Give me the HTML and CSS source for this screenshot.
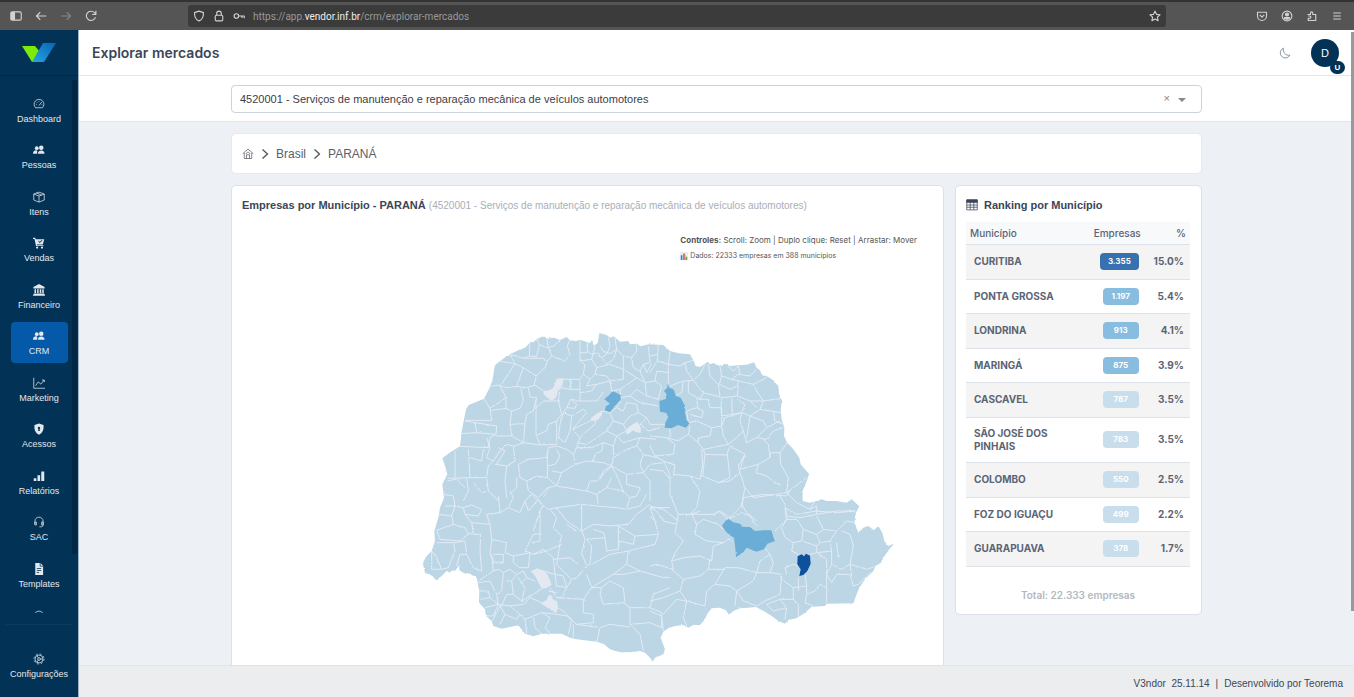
FILE: index.html
```html
<!DOCTYPE html>
<html lang="pt-BR">
<head>
<meta charset="utf-8">
<title>Explorar mercados</title>
<link rel="stylesheet" href="styles.css">
</head>
<body>
<div class="browser">
  <div class="browser-nav">
    <button class="tool" aria-label="Painel lateral"><svg viewBox="0 0 16 16"><rect x="1" y="2.500" width="14" height="11" rx="2"/><path d="M2 3.500h4v9H2z" fill="currentColor"/></svg></button>
    <button class="tool" aria-label="Voltar"><svg viewBox="0 0 16 16"><path d="M15 8H2M7 3 2 8l5 5"/></svg></button>
    <button class="tool dim" aria-label="Avançar"><svg viewBox="0 0 16 16"><path d="M1 8h13M9 3l5 5-5 5"/></svg></button>
    <button class="tool" aria-label="Recarregar"><svg viewBox="0 0 16 16"><path d="M14 9.500A6.200 6.200 0 1 1 12.500 3.500L14 5M14.500 1v5h-5"/></svg></button>
  </div>
  <div class="address">
    <svg viewBox="0 0 16 16"><path d="M8 1.500 14 3.500C14 9 12 13 8 14.500 4 13 2 9 2 3.500z"/></svg>
    <svg viewBox="0 0 16 16"><rect x="3" y="7" width="10" height="7.500" rx="1.500"/><path d="M5 7V4.500a3 3 0 0 1 6 0V7"/></svg>
    <svg viewBox="0 0 16 16"><circle cx="4.500" cy="8" r="3"/><path d="M7.500 8H15v3M12 8v2.500"/></svg>
    <span class="url">https://app.<b>vendor.inf.br</b>/crm/explorar-mercados</span>
    <svg class="star" viewBox="0 0 16 16"><path d="m8 1.500 2 4.300 4.700.6-3.500 3.200.9 4.700L8 12l-4.100 2.300.9-4.700L1.300 6.400 6 5.800z"/></svg>
  </div>
  <div class="browser-tools">
    <button class="tool" aria-label="Pocket"><svg viewBox="0 0 16 16"><path d="M2 3h12v5a6 6 0 0 1-12 0zM5 6.500l3 3 3-3"/></svg></button>
    <button class="tool" aria-label="Conta"><svg viewBox="0 0 16 16"><circle cx="8" cy="8" r="6.500"/><circle cx="8" cy="6" r="2" fill="currentColor"/><path d="M4.500 10h7c0 3-7 3-7 0z" fill="currentColor"/></svg></button>
    <button class="tool" aria-label="Extensões"><svg viewBox="0 0 16 16"><path d="M2 6h4V4a1.500 1.500 0 0 1 3 0v2h4v8H3v-3h2a1.500 1.500 0 0 0 0-3H3"/></svg></button>
    <button class="tool" aria-label="Menu"><svg viewBox="0 0 16 16"><path d="M3 4h10M3 8h10M3 12h10"/></svg></button>
  </div>
</div>

<div class="app">
  <aside class="sidebar">
    <a class="logo" href="#" aria-label="Vendor">
      <svg viewBox="0 0 34 20"><defs><linearGradient id="lg" x1="1" y1="0" x2="0" y2="1"><stop offset="0" stop-color="#0a62b4"/><stop offset="1" stop-color="#27a5e4"/></linearGradient></defs><path d="M0 3h13l5 6-7 10h-1z" fill="#7bea0c"/><path d="M21 0h13L22 19H10z" fill="url(#lg)"/></svg>
    </a>
    <nav class="nav">
      <ul>
        <li><a href="#"><svg viewBox="0 0 16 16"><path d="M3.500 13h9a6.500 6.500 0 1 0-9 0zM8 10l3.500-4.500M4 8.500h1M5 5.500l.7.700M8 4v1M11.500 9h1"/></svg>Dashboard</a></li>
        <li><a href="#"><svg class="fill" viewBox="0 0 16 16"><circle cx="5" cy="5.500" r="2.500"/><circle cx="11" cy="5" r="3"/><path d="M0 13c0-4 3-5 5-4.500 1 .2.500 2 .500 4.500zM6.500 13c0-6 9-6 9 0z"/></svg>Pessoas</a></li>
        <li><a href="#"><svg viewBox="0 0 16 16"><path d="M8 1.500 15 4v8l-7 2.800L1 12V4zM1 4l7 2.800L15 4M8 6.800v8M4.500 2.700l7 2.800"/></svg>Itens</a></li>
        <li><a href="#"><svg class="fill" viewBox="0 0 16 16"><path d="M0 1h3l.6 2H15l-2 7H5l.3 1H14v1H4L2 2.500H0zM7 5.500 9 8l3.500-3.500-.7-.7L9 6.500l-1.200-1.700z" fill-rule="evenodd"/><circle cx="5.500" cy="14" r="1.500"/><circle cx="12" cy="14" r="1.500"/></svg>Vendas</a></li>
        <li><a href="#"><svg class="fill" viewBox="0 0 16 16"><path d="m8 0 7.500 4v2H.5V4zM2 7h2v5H2zM5.500 7h2v5h-2zM9 7h2v5H9zM12.300 7h2v5h-2zM1 12.500h14V14h1v1.500H0V14h1z"/></svg>Financeiro</a></li>
        <li><a class="active" href="#"><svg class="fill" viewBox="0 0 16 16"><circle cx="5" cy="5.500" r="2.500"/><circle cx="11" cy="5" r="3"/><path d="M0 13c0-4 3-5 5-4.500 1 .2.500 2 .500 4.500zM6.500 13c0-6 9-6 9 0z"/></svg>CRM</a></li>
        <li><a href="#"><svg viewBox="0 0 16 16"><path d="M1 1v14h15M3.500 11.500l3.500-5 3.500 3L15 4M12 4h3v3"/></svg>Marketing</a></li>
        <li><a href="#"><svg class="fill" viewBox="0 0 16 16"><path fill-rule="evenodd" d="M8 .5 14 2.500c.8 6-1.500 11-6 13-4.500-2-6.800-7-6-13zM8 5a1.600 1.600 0 0 0-.8 3L6.800 10.500h2.400L8.800 8A1.600 1.600 0 0 0 8 5z"/></svg>Acessos</a></li>
        <li><a href="#"><svg class="fill" viewBox="0 0 16 16"><path d="M1 11h3.500v3.500H1zM6 7h3.500v7.500H6zM11 2h4v12.500h-4z"/></svg>Relatórios</a></li>
        <li><a href="#"><svg viewBox="0 0 16 16"><path d="M2.500 11V7a5.500 5.500 0 0 1 11 0v5c0 2-1.500 2.500-5 2.500M2.500 8h2v4h-2zM11.500 8h2v4h-2z"/></svg>SAC</a></li>
        <li><a href="#"><svg class="fill" viewBox="0 0 16 16"><path fill-rule="evenodd" d="M3 0h6v4.500h4.500V16H3zM10 0l3.500 3.500H10zM5 7v1h6V7zM5 9.500v1h6v-1zM5 12v1h3v-1z"/></svg>Templates</a></li>
        <li><a class="next" href="#" aria-label="Mais"><svg viewBox="0 0 16 16"><circle cx="8" cy="8" r="6.500"/></svg></a></li>
      </ul>
      <span class="nav-thumb"></span>
    </nav>
    <div class="nav-bottom">
      <a href="#"><svg viewBox="0 0 16 16"><circle cx="8" cy="8" r="5.300"/><circle cx="8" cy="8" r="1.800"/><path d="M9.500 8H13M7 9.500 5.500 12.500M7 6.500 5.500 3.500"/><circle cx="8" cy="8" r="6.700" stroke-dasharray="2.600 2.660"/></svg>Configurações</a>
    </div>
  </aside>

  <main class="main">
    <header class="topbar">
      <h1>Explorar mercados</h1>
      <button class="moon" aria-label="Modo escuro"><svg viewBox="0 0 16 16"><path d="M6 1.500a6.800 6.800 0 1 0 8.500 9.500A7.500 7.500 0 0 1 6 1.500z"/></svg></button>
      <button class="avatar" aria-label="Perfil">D<span class="avatar-badge">U</span></button>
    </header>

    <div class="filter">
      <div class="container select-wrap">
        <select aria-label="CNAE"><option>4520001 - Serviços de manutenção e reparação mecânica de veículos automotores</option></select>
        <button class="clear" aria-label="Limpar">×</button>
        <span class="caret"></span>
      </div>
    </div>

    <div class="content">
      <div class="container stack">
        <nav class="card crumbs" aria-label="Localização">
          <a href="#" aria-label="Início"><svg viewBox="0 0 16 16"><path d="M1 7.500 8 1.500l7 6M3 6.500V14h10V6.500M6 14V9h4v5M5 8l3-3 3 3"/></svg></a>
          <svg class="chev" viewBox="0 0 10 12"><path d="m2.500 1.500 5 4.500-5 4.500"/></svg>
          <a href="#">Brasil</a>
          <svg class="chev" viewBox="0 0 10 12"><path d="m2.500 1.500 5 4.500-5 4.500"/></svg>
          <span>PARANÁ</span>
        </nav>

        <div class="grid">
          <section class="card map-card">
            <h2>Empresas por Município - PARANÁ <small>(4520001 - Serviços de manutenção e reparação mecânica de veículos automotores)</small></h2>
            <div class="map">
              <div class="map-info">
                <p><b>Controles:</b> Scroll: Zoom | Duplo clique: Reset | Arrastar: Mover</p>
                <p class="data"><svg viewBox="0 0 10 10"><path d="M0 0h10v10H0z" fill="#e9eef4"/><path d="M1 4h2v6H1z" fill="#3c78d8"/><path d="M4 2h2v8H4z" fill="#db5044"/><path d="M6 3h1v7H6z" fill="#f3b21b"/><path d="M7 6h2v4H7z" fill="#57a45b"/></svg> Dados: 22333 empresas em 388 municípios</p>
              </div>
              <svg class="map-svg" viewBox="-504 -294 2070 1360" role="img" aria-label="Mapa do Paraná">
                <defs>
                  <filter id="rough" x="-5%" y="-5%" width="110%" height="110%"><feTurbulence type="fractalNoise" baseFrequency=".11" numOctaves="2" seed="4"/><feDisplacementMap in="SourceGraphic" scale="6" xChannelSelector="R" yChannelSelector="G"/></filter>
                  <clipPath id="state"><use href="#outline"/></clipPath>
                </defs>
                <g filter="url(#rough)">
                <path id="outline" class="land" d="M97 412 122 393 150 376 155 330 163 290 168 265 176 252 222 233 235 208 247 180 252 148 255 133 270 120 300 100 325 88 345 80 362 63 370 64 383 52 395 47 405 47 410 53 432 50 450 57 470 48 480 58 498 60 510 56 540 66 545 58 552 74 563 66 568 36 590 42 600 50 612 46 630 62 655 60 660 70 680 68 692 76 715 70 760 72 780 90 805 97 840 100 850 118 857 135 870 138 885 128 892 123 900 130 910 126 930 135 945 128 960 135 985 133 1010 131 1032 124 1040 140 1050 148 1055 160 1075 168 1090 178 1105 195 1108 225 1117 240 1112 265 1115 295 1123 320 1122 345 1132 365 1150 385 1168 410 1172 430 1198 460 1190 480 1185 495 1177 510 1178 540 1200 545 1220 540 1235 535 1250 540 1280 540 1310 545 1325 535 1348 556 1338 575 1333 605 1345 635 1360 620 1375 615 1392 628 1405 615 1417 635 1423 660 1435 675 1452 668 1438 685 1420 710 1413 725 1397 735 1390 750 1365 775 1348 800 1340 820 1330 847 1250 848 1245 855 1205 857 1185 875 1160 892 1135 897 1125 908 1105 900 1085 885 1065 872 1038 858 1015 860 990 862 970 870 957 882 948 868 930 860 905 862 892 878 885 895 870 912 850 912 835 920 820 912 795 915 775 922 760 932 752 950 765 985 760 1000 735 1010 728 1022 720 1010 705 995 690 990 660 994 630 994 600 985 580 968 560 962 500 955 480 950 455 938 395 938 370 946 345 938 325 913 300 918 275 923 250 915 245 900 228 885 225 865 207 845 208 810 203 785 200 770 180 758 160 755 148 748 148 732 135 750 125 747 120 755 110 750 95 765 78 778 68 765 45 755 38 725 50 705 65 690 75 660 73 630 85 590 90 560 102 530 97 490 112 460 105 435z"/>
                <g class="borders" clip-path="url(#state)">
                  <path d="M360 60 358 105 380 108 388 70 380 50M358 105 340 112 300 100 315 128 340 140 378 165 405 140 412 120 400 112 340 112M315 128 275 190M265 120 315 128M340 140 318 200M372 195 378 165M410 50 415 80 425 105 412 120M388 70 410 80 432 75 450 57M425 105 465 120 480 100 472 75 480 55M510 55V120L525 130 520 160 508 175H440M510 95H532V60M510 120 545 115 555 75M235 198 265 192 290 200 320 196 350 200 375 192 400 210M270 195 288 230V262L305 270 330 262 340 240 332 200M288 230 240 262 222 233M240 262 245 298H165M245 268 288 262M305 270 300 310 345 308 350 280 370 270 380 230 360 228 355 200M165 300 195 305 200 335 150 338M195 305 260 315 258 340 240 350 235 380 150 376M200 335 258 340M258 345H305L300 310M305 345 340 365 345 308M378 240V340L390 372 340 365M378 262 400 240H445L450 200 482 205V175M445 240 455 280 440 300 415 310 410 330 382 342M440 300V370L390 372M482 205H510V175M510 205V240L482 235 470 260 460 275 485 285 480 330 465 365 445 350 450 310 460 275M482 235 500 250 495 262 470 260M485 285 520 265 530 275 500 310 488 325M510 215 545 210 560 190 600 180M510 240H560L580 215"/>
                  <path d="M532 90 545 100 560 96 575 110 590 100 600 75 595 50M570 75 580 90 600 98 620 85 615 50M545 115 560 140 600 130 640 145 680 170 705 185 735 180M575 110 590 130 610 115 620 85 640 105 640 145M640 105 665 110 680 90 678 70M665 110 670 140 690 150 700 130 720 125 715 75M700 130 710 155 725 128M690 150 705 185 710 225 745 235 755 195 735 180 740 150 775 155M520 160 540 175 555 160 590 165 600 180 640 175 640 145M555 160 560 140M540 175 530 195 560 190M600 180 605 210 630 205 660 185 680 170M630 205 632 230 660 225 690 245 745 255M660 225 680 205 710 225M632 240 620 260 600 275 580 270 560 285 540 300 488 325M620 260 640 270 650 245 680 250 685 275 660 285 640 310 610 300 600 275M610 300 590 330 560 350 530 370 500 365M640 310 650 330 620 345 590 330M620 345 640 365 690 350 740 355M685 275 710 290 720 310 765 310M710 290 690 310 715 330 750 320M690 350 680 375 700 400 740 410M560 285 555 310 530 330 510 350 488 325M510 350 500 380 490 400 495 430 530 420 580 425 605 435M500 380 545 380 580 365 610 375 620 345M580 365 575 390 555 400 550 420M610 375 610 410 605 435 560 480 540 480 530 510M610 410 650 385 680 375M605 435 625 475 640 510M605 435 580 450 570 475M605 435 650 460 700 455 720 430 760 425M650 460 650 490 690 500M700 455 720 480 720 540M700 400 690 430 700 455M230 350 240 380 230 410 250 420 270 390 290 370 310 375 315 420 290 435 255 430M175 385 180 470 112 472M135 390V470M180 410 215 420 220 385M180 470 230 470 235 435 250 420M290 435 285 480 290 530M315 375 340 365M325 430 355 415 410 410 415 380 440 375 470 385 490 400M325 430 330 470 350 480 380 465 412 470 412 400M350 480 355 510 385 530 412 500 440 495 455 455 495 430M455 455 425 450M412 470 440 495 530 510M440 385 450 405 435 430 412 435M265 380 285 390 260 430M230 470 235 510 265 540M170 472 175 510 160 540M112 480 140 475 165 500M190 485 215 515 235 510M320 470 320 500 300 520M415 500 400 530M530 510 560 520 590 500 605 470M560 520 565 550M590 500 640 510 660 530 650 560M690 500 680 525 660 530"/>
                </g>
                <g class="borders" clip-path="url(#state)">
                  <g transform="translate(720)">
                  <path d="M25 70 22 120 55 130 60 92M55 130V190M0 105 22 100M0 155 22 120M55 130 90 135 105 125 130 118M105 125 110 150 130 178 100 180 60 195M100 180 95 215 75 225M130 178 150 160 165 130M130 178 160 215 210 228 205 190 180 165 175 130M115 180V215L150 235 160 215M210 135 215 165 208 190M215 165 245 175 265 160 300 165 320 145M235 135 250 150 265 135 270 160M208 190 240 205 262 195 265 180 245 175M265 180 310 190 350 170M265 195 262 225 215 230M262 225 300 240 340 240 320 210 310 190M340 240 395 232M340 240 330 265 395 275M215 230 213 260H180L175 235 150 235M245 232 247 280 215 285 213 260M247 280 275 275 285 250 262 235M275 275 300 285 330 265M300 240 320 260M110 270 140 260 160 270 155 290 120 280M110 270 115 305 140 300 185 320 215 315V260M185 320 180 345 145 350 145 365 160 385 235 370 220 345 215 315 225 290 275 275M145 265 140 235 150 230M235 370 260 350 280 330 270 300 275 275M280 330 290 365 320 350 350 320 340 300 300 285 295 320 290 350M320 350 350 355 370 330 400 320M350 320 390 300M370 270 375 300 400 310M0 345 50 350 85 360 115 340 145 365M60 320 60 350M115 340 120 315M0 375 15 405 70 400 75 370 50 350M15 405 40 420 75 432 70 460 120 465 150 475 158 430 155 385M75 432 55 425M0 445 40 450 60 475 75 460M40 420 55 450 60 470M160 385 165 400 230 402 240 375M165 400 158 465 205 485 240 470 232 400M240 375 285 400 265 435 270 455 240 480 205 485M285 400 270 445 325 430 360 410 355 370 340 355M360 410 362 395 390 395 412 365M390 395 392 430 415 470 410 515M325 430 318 455 350 465 375 485 392 492M270 455 285 500 275 550 265 565 240 590M120 465 150 510 140 560 120 580 85 580 60 520 60 475M285 500 310 530 380 520 410 515 470 470M410 515 440 545 480 565 495 540M390 525 405 550 410 585M0 555 40 565 85 600M120 580 190 580 210 570 240 590M275 550 290 575 320 600M410 585 450 590 500 580 500 555 480 565M500 580 560 570 615 570"/>
                  </g>
                  <g transform="translate(0 510)">
                  <path d="M102 10 130 15 135 45 105 45M135 45 125 75 85 70M135 45 160 50 185 42 215 55 205 75 165 70 160 50M125 75 130 100 80 118 90 145M130 100 165 110 175 130 150 150 90 145M165 70 185 95 190 125 175 130M185 95 240 100 230 70 270 65 265 15M240 100 245 145 240 190M80 155 130 155 135 180 115 230 95 235 80 200 65 180M65 180V235H95M130 155 165 150 170 190 150 190 140 225M170 190 190 230 215 240M190 130 212 130 210 180 215 240M245 145 290 155 285 185 310 195 360 185 345 180 370 130 395 128M240 190 255 215 280 215V190L250 190M360 185 370 190 410 180 455 160M360 185 355 230 330 230 310 215 310 195M365 155 390 150V60L370 120M270 65 295 50 310 20 300 0M295 50 330 65 345 30 365 10M345 30 355 60 385 25 400 45 385 65M365 10 400 45 415 55 440 50 480 45 515 40 560 45 620 50 650 55 690 45 710 10M420 55 440 80 430 110 455 135 450 155M440 50 470 90 515 120 515 40M470 100 500 120M515 120 550 100 600 105 655 100 680 70 720 40M515 120 525 145 515 185 530 225 500 260 485 265 440 220 450 160M530 145 545 165 540 220 530 225M530 145 585 140 580 125 550 115M585 140 590 180 625 175 625 105M625 175 628 150 670 160 675 135 625 105M675 135 745 130 735 90 720 75M735 90 720 50 780 50M545 220 600 190 655 180 650 220 610 250 560 280 545 290 530 250M370 190 400 175 430 200 435 250 400 240M430 205 480 200 505 220M245 190 250 240 205 270M250 240 265 235 280 245 275 300 260 310 240 270 205 275M280 245 300 235 320 250 305 270 290 270M305 270 310 310 290 310 275 345 265 340 260 310M320 250 340 240 350 260 335 275 325 260M350 260 375 270M310 310 335 330 345 290 335 275M335 330 370 310 400 290M208 300 235 300 240 320 210 325M240 320 265 340 225 350M265 340 250 375 228 375M265 340 300 345 330 370 320 385 285 370 270 345 245 395M300 345 340 340 360 320 395 335M285 370 270 400M330 370 345 385 395 365 440 370M345 385 350 428M370 375 375 410 395 428M440 370 470 375 500 400 570 410 600 400 660 408M395 365 420 380 405 410 420 428M440 350 460 360 485 385 475 430M435 250 440 285 470 290 485 265M435 250 460 255 470 290 455 320 440 320 420 290M440 320 520 325 545 290M520 325 520 365 550 370 550 395 500 400M490 400V440M570 410 560 455M545 290 575 290 570 310 580 340 640 335 660 350 720 350 755 365M610 250 640 250 690 240 760 260 780 260M575 290 600 270 640 290 645 335M660 350 660 400 690 430 700 480M660 400 720 395 755 410 755 370M655 180 735 160 745 130M650 220 690 240M720 350 730 310 780 290M415 300 440 305"/>
                  </g>
                  <g transform="translate(720 510)">
                  <path d="M0 50 20 60 40 90 80 100 85 70 125 70 150 60M80 100 75 125 100 150 75 185 65 210 100 200 150 195 185 210 190 165 220 155M125 70 140 100 160 85 205 100 220 115M190 75 205 60 235 85M140 100 135 130 170 150 220 155 235 145 250 150M65 210 70 235 20 220 0 225M65 235 100 265 150 255 175 235 180 205M100 265 90 300 110 330 165 345 170 300 195 280 240 285 260 300 310 270 320 245 265 230 225 230 195 280M175 235 225 235M260 300 255 345M90 300 40 320 0 330M110 330 100 380 110 405M110 330 80 325 35 375 40 420M0 360 35 375M260 300 280 330 320 345 345 330 390 310 395 250 360 245 320 245M320 245 330 210 360 190 345 170M360 190 370 215 360 245M235 85 275 65 300 75 320 105M275 50 280 20 340 10 410 15 420 0M375 120 410 85 405 50 440 70 500 60 560 65 615 60M410 85 440 85 460 115 500 130 520 115 500 75M410 85 395 110 405 140 430 155 425 180 445 190M460 115 455 150 430 155M455 150 500 165 510 155 500 130M520 115 560 120 590 90 615 95M560 120 540 150 510 155M540 150 545 180 500 185 500 165M480 190 500 185 530 205 530 250 545 220 575 235 600 220 610 165 600 130 575 120M545 180 545 220M560 155 565 200M530 250 530 335M530 250 545 275 560 250 600 250 610 285 625 280 660 245M600 220 605 255M600 220 650 235 680 225M395 265 430 290 470 285 465 250M410 250 405 230 430 220 445 225M430 290 430 325 390 325 350 340M430 325 445 340 445 380M390 325 410 350 405 385M470 285 470 310 495 300 510 280 530 290M470 310 465 335 490 345M445 300 445 260M350 340 370 360 410 350"/>
                  </g>
                </g>
                <path class="none" d="M440 173 462 172 458 190 444 208 440 228 425 240 412 230 400 218 402 210 418 208 430 200zM542 292 560 278 578 268 576 282 562 298 545 300zM648 340 652 322 668 310 682 303 693 320 692 336 680 334 670 328 656 338zM362 750 382 743 400 748 412 760 420 778 425 792 408 802 395 802 385 785 376 766zM392 846 410 838 416 822 426 824 430 835 442 842 444 860 438 878 425 866 412 860z"/>
                <path class="mid" d="M608 210 632 222 632 236 614 255 600 274 584 268 588 256 600 248 583 235 598 222zM772 188 778 200 790 205 798 225 812 230 825 255 824 270 830 298 838 307 828 320 804 312 784 322 764 320 766 305 775 288 767 275 750 272 748 240 765 235 770 220 762 210 772 200z"/>
                <path class="mid" d="M936 614 946 600 956 594 970 604 990 608 998 617 1020 618 1035 630 1062 628 1084 628 1090 648 1095 660 1072 668 1062 685 1040 692 1010 680 1000 694 978 709 976 682 972 650 955 640 945 628z"/>
                <path class="top" d="M1163 706 1175 700 1182 706 1188 698 1200 704 1202 728 1192 750 1180 762 1168 765 1172 745 1162 730z"/>
                </g>
              </svg>
            </div>
          </section>

          <section class="card ranking">
            <h2><svg viewBox="0 0 16 16"><path d="M1 1.500h14v13H1zM1 8h14M1 11h14M5.600 4v10.500M10.400 4v10.500"/><path d="M1 1h14v3.500H1z" fill="currentColor"/></svg>Ranking por Município</h2>
            <table>
              <thead><tr><th>Município</th><th>Empresas</th><th>%</th></tr></thead>
              <tbody>
                <tr><td>CURITIBA</td><td><span class="badge b1">3.355</span></td><td>15.0%</td></tr>
                <tr><td>PONTA GROSSA</td><td><span class="badge b2">1.197</span></td><td>5.4%</td></tr>
                <tr><td>LONDRINA</td><td><span class="badge b2">913</span></td><td>4.1%</td></tr>
                <tr><td>MARINGÁ</td><td><span class="badge b2">875</span></td><td>3.9%</td></tr>
                <tr><td>CASCAVEL</td><td><span class="badge">787</span></td><td>3.5%</td></tr>
                <tr><td>SÃO JOSÉ DOS PINHAIS</td><td><span class="badge">783</span></td><td>3.5%</td></tr>
                <tr><td>COLOMBO</td><td><span class="badge">550</span></td><td>2.5%</td></tr>
                <tr><td>FOZ DO IGUAÇU</td><td><span class="badge">499</span></td><td>2.2%</td></tr>
                <tr><td>GUARAPUAVA</td><td><span class="badge">378</span></td><td>1.7%</td></tr>
              </tbody>
            </table>
            <p class="total">Total: 22.333 empresas</p>
          </section>
        </div>
      </div>
    </div>

    <footer class="footer"><span>V3ndor&nbsp; 25.11.14</span><span>|</span><span>Desenvolvido por Teorema</span></footer>
    <span class="page-thumb"></span>
  </main>
</div>
</body>
</html>
```
FILE: styles.css
```css
* { box-sizing: border-box; }
body {
  margin: 0;
  height: 100vh;
  display: flex;
  flex-direction: column;
  overflow: hidden;
  font-family: "Liberation Sans", Arial, sans-serif;
  font-size: 11px;
  color: #3b4658;
  background: #edf1f6;
}
h1, h2, p, ul { margin: 0; padding: 0; }
button { border: 0; background: none; padding: 0; color: inherit; font: inherit; }
a { color: inherit; text-decoration: none; }
svg { display: block; fill: none; stroke: currentColor; stroke-linejoin: round; }
svg.fill { fill: currentColor; stroke: none; }

/* browser chrome */
.browser {
  display: flex;
  align-items: center;
  flex: none;
  height: 30px;
  padding: 0 11px 0 10px;
  background: #555;
  border-top: 2px solid #333;
  color: #d2d2d2;
}
.browser svg { width: 12px; height: 12px; stroke-width: 1.5; }
.browser-nav { display: flex; gap: 13px; width: 178px; }
.tool { display: block; width: 12px; }
.dim { color: #858585; }
.address {
  flex: 1;
  max-width: 978px;
  height: 22px;
  display: flex;
  align-items: center;
  gap: 8px;
  padding: 0 5px;
  background: #3b3b3b;
  border-radius: 3px;
}
.url { flex: 1; font-family: Roboto, "Noto Sans", sans-serif; font-size: 10px; color: #999; }
.url b { font-weight: 400; color: #eee; }
.browser-tools { display: flex; gap: 13px; margin-left: auto; }

/* shell */
.app { flex: 1; min-height: 0; display: flex; }
.sidebar {
  flex: none;
  width: 79px;
  display: flex;
  flex-direction: column;
  background: #023255;
  color: #e4e8ec;
  font-size: 9px;
  border-right: 1px solid #9fb2c3;
}
.logo { flex: none; height: 46px; display: grid; place-items: center; border-bottom: 1px solid #022744; }
.logo svg { width: 34px; height: 20px; stroke: none; }
.nav { position: relative; flex: 1; overflow: hidden; padding-top: 13px; }
.nav ul { list-style: none; height: 558px; display: grid; grid-template-rows: repeat(12, 1fr); justify-content: center; }
.nav a, .nav-bottom a {
  width: 57px;
  height: 41px;
  display: flex;
  flex-direction: column;
  align-items: center;
  justify-content: center;
  gap: 3px;
  padding-top: 3px;
  line-height: 12px;
  border-radius: 4px;
}
.nav svg, .nav-bottom svg { width: 12px; height: 12px; }
.nav a.active { background: #0459a8; }
.nav a.next { justify-content: flex-start; padding-top: 9px; }
.nav-thumb { position: absolute; right: 1px; top: 4px; width: 5px; height: 474px; background: #022744; }
.nav-bottom { flex: none; height: 73px; margin: 11px 6px 0; padding-top: 19px; border-top: 1px solid #0c3c60; }
.nav-bottom a { width: 100%; }
.main { position: relative; flex: 1; min-width: 0; display: flex; flex-direction: column; }
.topbar {
  flex: none;
  height: 46px;
  display: flex;
  align-items: center;
  padding: 0 15px 0 13px;
  background: #fff;
  border-bottom: 1px solid #e3e7ec;
}
h1 { font-family: Inter, "Liberation Sans", sans-serif; font-size: 14px; font-weight: 600; color: #3b4658; }
.moon { margin-left: auto; margin-right: 20px; color: #64748b; }
.moon svg { width: 12px; height: 12px; }
.avatar { position: relative; width: 28px; height: 28px; border-radius: 50%; background: #023255; color: #fff; font-size: 11px; }
.avatar-badge {
  position: absolute;
  right: -6px;
  bottom: -7px;
  width: 15px;
  height: 13px;
  border-radius: 7px;
  background: #023255;
  font-size: 8px;
  font-weight: 700;
  line-height: 13px;
}
.filter { flex: none; height: 46px; padding-top: 9px; background: #fff; border-bottom: 1px solid #e1e6ec; }
.container { width: 100%; max-width: 971px; margin: 0 auto; }
.select-wrap { position: relative; }
select {
  display: block;
  appearance: none;
  width: 100%;
  height: 28px;
  padding: 0 8px;
  border: 1px solid #cdd2dc;
  border-radius: 4px;
  background: #fff;
  color: #3b4047;
  font: inherit;
}
.clear { position: absolute; right: 32px; top: 6px; line-height: 15px; color: #888; }
.caret { position: absolute; right: 16px; top: 13px; border: 4px solid transparent; border-top-color: #888; border-bottom: 0; }

/* content */
.content { flex: 1; min-height: 0; overflow: hidden; padding-top: 11px; }
.stack { display: flex; flex-direction: column; gap: 11px; }
.card { background: #fff; border: 1px solid #dce1e9; border-radius: 5px; }
.crumbs { display: flex; align-items: center; gap: 6px; height: 41px; padding: 0 10px; font-size: 12px; color: #5a5f66; border-color: #e6eaef; }
.crumbs a svg { width: 12px; height: 12px; }
.crumbs .chev { width: 10px; height: 12px; stroke-width: 1.5; }
.grid { display: grid; grid-template-columns: minmax(0, 1fr) 247px; gap: 11px; align-items: start; }
h2 { font-size: 11px; font-weight: 700; line-height: 16px; color: #3b4658; }
.map-card { padding: 11px 11px 20px 10px; }
h2 small { font-size: 10px; font-weight: 400; color: #a8aeb8; }
.map { position: relative; padding-top: 9px; }
.map-info { position: absolute; top: 18px; right: 15px; font-family: Inter, "Liberation Sans", sans-serif; font-size: 8px; line-height: 16px; color: #555; }
.data { display: flex; align-items: center; gap: 2px; font-size: 7px; }
.data svg { width: 8px; height: 8px; stroke: none; }
.map-svg { width: 100%; height: auto; stroke: none; }
.land { fill: #bcd6e6; }
.borders { fill: none; stroke: #e2ebf4; stroke-width: 3; }
.none { fill: #e4e8f1; }
.mid { fill: #6aadd6; }
.top { fill: #08519c; }

.ranking { padding: 11px 11px 10px 10px; }
.ranking h2 { display: flex; align-items: center; gap: 6px; }
.ranking h2 svg { width: 12px; height: 12px; }
table { width: 100%; margin-top: 9px; border-collapse: collapse; font-family: Inter, "Liberation Sans", sans-serif; font-size: 10px; color: #5b6475; }
th { height: 22px; padding: 0 4px; background: #f7f9fb; border-bottom: 1px solid #dde1e8; font-weight: 500; text-align: right; }
th:first-child { text-align: left; }
td { height: 34px; padding: 0 6px; border-bottom: 1px solid #dde1e8; font-weight: 700; text-align: right; line-height: 13px; }
td:first-child { text-align: left; width: 120px; padding-left: 8px; }
tbody tr:nth-child(odd) td { height: 35px; background: #f4f4f4; }
tbody tr:nth-child(6) td { height: 45px; }
.badge { display: inline-block; min-width: 36px; padding: 0 8px; border-radius: 4px; background: #c8deec; color: #fff; font-size: 8px; font-weight: 700; line-height: 17px; text-align: center; }
.b1 { background: #3771b0; }
.b2 { background: #89bddf; }
.total { margin-top: 19px; font-family: Inter, "Liberation Sans", sans-serif; font-size: 10px; font-weight: 600; line-height: 18px; text-align: center; color: #b3b8c0; }
.footer {
  flex: none;
  height: 32px;
  display: flex;
  align-items: center;
  justify-content: flex-end;
  gap: 6px;
  padding: 4px 11px 0;
  background: #ebedee;
  border-top: 1px solid #e0e4e8;
  font-size: 10px;
}
.page-thumb { position: absolute; right: 0; top: 2px; width: 3px; height: 579px; background: #999; }
```
